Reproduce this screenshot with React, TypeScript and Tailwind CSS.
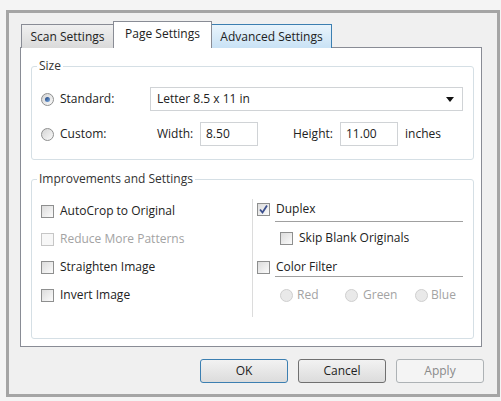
import React from "react";

const font = { fontFamily: '"Open Sans", "Liberation Sans", sans-serif' };

function Checkbox({ checked = false, disabled = false }: { checked?: boolean; disabled?: boolean }) {
  return (
    <span
      className={`relative flex h-[13px] w-[13px] shrink-0 items-center justify-center border ${
        disabled ? "border-[#c6c6c6] bg-[#f7f7f7]" : "border-[#8e8f8f] bg-gradient-to-br from-[#dcdcdc] to-[#fbfbfb]"
      }`}
    >
      {checked && (
        <svg width="11" height="11" viewBox="0 0 11 11">
          <path d="M2 5.5 L4.5 8.5 L9 1.5" fill="none" stroke="#3b4f8e" strokeWidth="1.8" />
        </svg>
      )}
    </span>
  );
}

function Radio({ selected = false, disabled = false }: { selected?: boolean; disabled?: boolean }) {
  return (
    <span
      className={`flex h-[13px] w-[13px] shrink-0 items-center justify-center rounded-full border ${
        disabled ? "border-[#cfcfcf] bg-[#e9e9e9]" : "border-[#8e8f8f] bg-gradient-to-br from-[#d4d4d4] to-[#fafafa]"
      }`}
    >
      {selected && <span className="h-[5px] w-[5px] rounded-full bg-gradient-to-br from-[#1f3f7a] to-[#7fb0e6]" />}
    </span>
  );
}

function CheckRow({ label, checked, disabled }: { label: string; checked?: boolean; disabled?: boolean }) {
  return (
    <div className="flex h-[16px] items-center gap-[6px]">
      <Checkbox checked={checked} disabled={disabled} />
      <span className={disabled ? "text-[#a3a3a3]" : "text-[#222]"}>{label}</span>
    </div>
  );
}

function Button({ label, primary, disabled }: { label: string; primary?: boolean; disabled?: boolean }) {
  return (
    <button
      className={`h-[24px] w-[88px] rounded-[3px] border text-[12px] ${
        primary
          ? "border-[#3c7fb1] bg-gradient-to-b from-[#f2f2f2] to-[#dcdcdc] text-[#222]"
          : disabled
          ? "border-[#adb2b5] bg-[#f4f4f4] text-[#8a8a8a]"
          : "border-[#707070] bg-gradient-to-b from-[#f2f2f2] to-[#dcdcdc] text-[#222]"
      }`}
    >
      {label}
    </button>
  );
}

export default function App() {
  return (
    <div className="h-[401px] w-[501px] bg-[#f4f4f4] pl-[6px] pt-[10px] text-[12px] text-[#222]" style={font}>
      <div className="flex h-[387px] w-[494px] flex-col border-[3px] border-[#a5a5a5] bg-[#f0f0f0]">
        {/* tabs */}
        <div className="relative z-10 -mb-px flex h-[35px] items-end pl-[12px]">
          <div className="flex h-[24px] w-[92px] items-center justify-center border border-r-0 border-b-0 border-[#898c95] bg-gradient-to-b from-[#f0f0f0] to-[#dadada]">
            Scan Settings
          </div>
          <div className="flex h-[27px] w-[99px] items-center justify-center border border-b-0 border-[#898c95] bg-white pb-[2px]">
            Page Settings
          </div>
          <div className="flex h-[24px] w-[120px] items-center justify-center border border-b-0 border-l-0 border-[#3c7fb1] bg-gradient-to-b from-[#e9f4fc] to-[#c9e2f5]">
            Advanced Settings
          </div>
        </div>

        {/* panel */}
        <div className="ml-[11px] h-[300px] w-[462px] border border-[#898c95] bg-white px-[10px]">
          <fieldset className="mt-[11px] w-[443px] border border-[#d5dfe5] pb-[13px] pl-[9px] rounded-[3px]">
            <legend className="ml-[-4px] px-[2px] leading-[14px] text-[#333]">Size</legend>
            <div className="mt-[14px] flex h-[24px] items-center">
              <div className="flex w-[109px] items-center gap-[6px]">
                <Radio selected />
                <span>Standard:</span>
              </div>
              <div className="flex h-[24px] w-[313px] items-center justify-between border border-[#d0d3d6] bg-white pl-[6px] pr-[8px]">
                <span>Letter 8.5 x 11 in</span>
                <svg width="8" height="5" viewBox="0 0 8 5">
                  <path d="M0 0 H8 L4 5 Z" fill="#111" />
                </svg>
              </div>
            </div>
            <div className="mt-[11px] flex h-[24px] items-center">
              <div className="flex w-[116px] items-center gap-[6px]">
                <Radio />
                <span>Custom:</span>
              </div>
              <span className="w-[43px]">Width:</span>
              <div className="flex h-[24px] w-[58px] items-center border border-[#d0d3d6] pl-[5px]">8.50</div>
              <span className="ml-[35px] w-[47px]">Height:</span>
              <div className="flex h-[24px] w-[58px] items-center border border-[#d0d3d6] pl-[5px]">11.00</div>
              <span className="ml-[7px]">inches</span>
            </div>
          </fieldset>

          <fieldset className="mt-[12px] h-[167px] w-[443px] border border-[#d5dfe5] pl-[9px] rounded-[3px]">
            <legend className="ml-[-4px] px-[2px] leading-[14px] text-[#333]">Improvements and Settings</legend>
            <div className="mt-[13px] flex">
              <div className="flex w-[211px] flex-col gap-[12px] pt-[4px]">
                <CheckRow label="AutoCrop to Original" />
                <CheckRow label="Reduce More Patterns" disabled />
                <CheckRow label="Straighten Image" />
                <CheckRow label="Invert Image" />
              </div>
              <div className="h-[118px] w-px bg-[#dcdcdc]" />
              <div className="flex flex-col pl-[4px] pt-[2px]">
                <CheckRow label="Duplex" checked />
                <div className="ml-[18px] mt-[4px] h-px w-[188px] bg-[#a0a0a0]" />
                <div className="ml-[23px] mt-[8px]">
                  <CheckRow label="Skip Blank Originals" />
                </div>
                <div className="mt-[13px]">
                  <CheckRow label="Color Filter" />
                </div>
                <div className="ml-[18px] mt-px h-px w-[188px] bg-[#a0a0a0]" />
                <div className="ml-[23px] mt-[10px] flex h-[16px] items-center text-[#a3a3a3]">
                  <Radio disabled />
                  <span className="ml-[4px] w-[48px]">Red</span>
                  <Radio disabled />
                  <span className="ml-[5px] w-[52px]">Green</span>
                  <Radio disabled />
                  <span className="ml-[3px]">Blue</span>
                </div>
              </div>
            </div>
          </fieldset>
        </div>

        {/* buttons */}
        <div className="mt-[12px] flex justify-end gap-[10px] pr-[13px]">
          <Button label="OK" primary />
          <Button label="Cancel" />
          <Button label="Apply" disabled />
        </div>
      </div>
    </div>
  );
}
